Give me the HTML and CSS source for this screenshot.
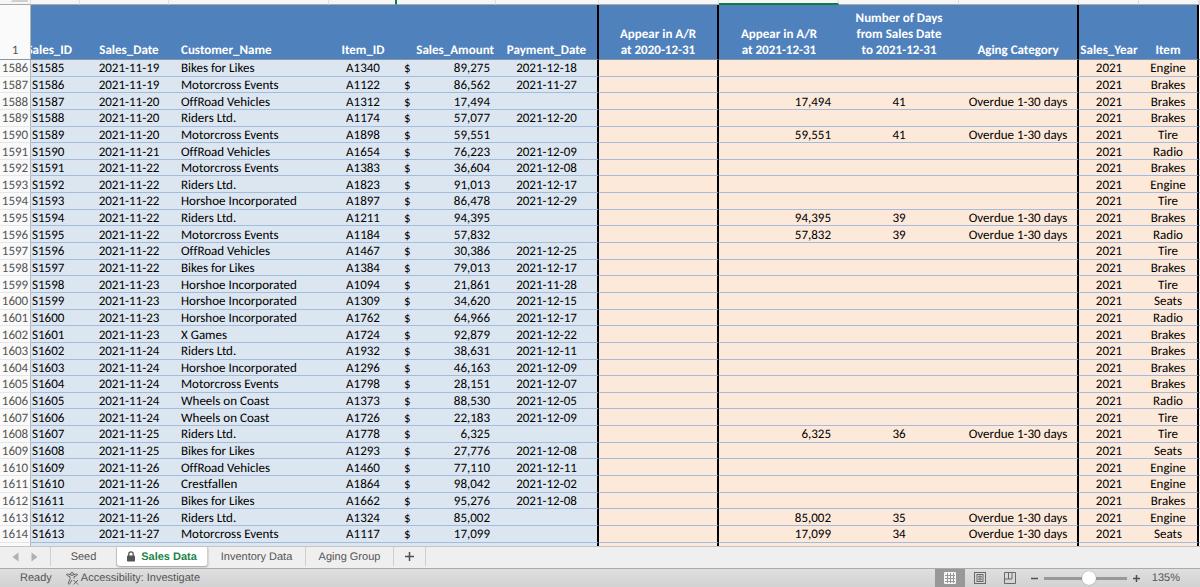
FILE: index.html
```
<!DOCTYPE html>
<html lang="en">
<head>
<meta charset="utf-8">
<title>Sales Data</title>
<link rel="stylesheet" href="styles.css">
</head>
<body>
<main class="sheet">
<table class="grid">
<colgroup><col class="w-row"><col class="w-id"><col class="w-date"><col class="w-customer"><col class="w-code"><col class="w-sign"><col class="w-amount"><col class="w-paid"><col class="w-wide"><col class="w-wide"><col class="w-wide"><col class="w-wide"><col class="w-narrow"><col class="w-narrow"><col class="w-edge"></colgroup>
<thead>
<tr class="letters"><td><svg class="corner" viewBox="0 0 31 4" aria-hidden="true"><path d="M13 0H28V2H10z" fill="#cfcfcf"/></svg><td><td><td><td class="split"><td class="plain"><td><td><td><td class="picked"><td><td><td><td><td></tr>
<tr class="titles"><th class="num">1<th><div class="clip">Sales_ID</div><th>Sales_Date<th>Customer_Name<th>Item_ID<th colspan="2" class="amount">Sales_Amount<th class="rule">Payment_Date<th class="rule">Appear in A/R<br>at 2020-12-31<th>Appear in A/R<br>at 2021-12-31<th>Number of Days<br>from Sales Date<br>to 2021-12-31<th class="rule">Aging Category<th>Sales_Year<th class="rule">Item<th class="blank"></tr>
</thead>
<tbody>
<tr><th>1586<td>S1585<td>2021-11-19<td>Bikes for Likes<td>A1340<td>$<td>89,275<td>2021-12-18<td><td><td><td><td>2021<td>Engine<td></tr>
<tr><th>1587<td>S1586<td>2021-11-19<td>Motorcross Events<td>A1122<td>$<td>86,562<td>2021-11-27<td><td><td><td><td>2021<td>Brakes<td></tr>
<tr><th>1588<td>S1587<td>2021-11-20<td>OffRoad Vehicles<td>A1312<td>$<td>17,494<td><td><td>17,494<td>41<td>Overdue 1-30 days<td>2021<td>Brakes<td></tr>
<tr><th>1589<td>S1588<td>2021-11-20<td>Riders Ltd.<td>A1174<td>$<td>57,077<td>2021-12-20<td><td><td><td><td>2021<td>Brakes<td></tr>
<tr><th>1590<td>S1589<td>2021-11-20<td>Motorcross Events<td>A1898<td>$<td>59,551<td><td><td>59,551<td>41<td>Overdue 1-30 days<td>2021<td>Tire<td></tr>
<tr><th>1591<td>S1590<td>2021-11-21<td>OffRoad Vehicles<td>A1654<td>$<td>76,223<td>2021-12-09<td><td><td><td><td>2021<td>Radio<td></tr>
<tr><th>1592<td>S1591<td>2021-11-22<td>Motorcross Events<td>A1383<td>$<td>36,604<td>2021-12-08<td><td><td><td><td>2021<td>Brakes<td></tr>
<tr><th>1593<td>S1592<td>2021-11-22<td>Riders Ltd.<td>A1823<td>$<td>91,013<td>2021-12-17<td><td><td><td><td>2021<td>Engine<td></tr>
<tr><th>1594<td>S1593<td>2021-11-22<td>Horshoe Incorporated<td>A1897<td>$<td>86,478<td>2021-12-29<td><td><td><td><td>2021<td>Tire<td></tr>
<tr><th>1595<td>S1594<td>2021-11-22<td>Riders Ltd.<td>A1211<td>$<td>94,395<td><td><td>94,395<td>39<td>Overdue 1-30 days<td>2021<td>Brakes<td></tr>
<tr><th>1596<td>S1595<td>2021-11-22<td>Motorcross Events<td>A1184<td>$<td>57,832<td><td><td>57,832<td>39<td>Overdue 1-30 days<td>2021<td>Radio<td></tr>
<tr><th>1597<td>S1596<td>2021-11-22<td>OffRoad Vehicles<td>A1467<td>$<td>30,386<td>2021-12-25<td><td><td><td><td>2021<td>Tire<td></tr>
<tr><th>1598<td>S1597<td>2021-11-22<td>Bikes for Likes<td>A1384<td>$<td>79,013<td>2021-12-17<td><td><td><td><td>2021<td>Brakes<td></tr>
<tr><th>1599<td>S1598<td>2021-11-23<td>Horshoe Incorporated<td>A1094<td>$<td>21,861<td>2021-11-28<td><td><td><td><td>2021<td>Tire<td></tr>
<tr><th>1600<td>S1599<td>2021-11-23<td>Horshoe Incorporated<td>A1309<td>$<td>34,620<td>2021-12-15<td><td><td><td><td>2021<td>Seats<td></tr>
<tr><th>1601<td>S1600<td>2021-11-23<td>Horshoe Incorporated<td>A1762<td>$<td>64,966<td>2021-12-17<td><td><td><td><td>2021<td>Radio<td></tr>
<tr><th>1602<td>S1601<td>2021-11-23<td>X Games<td>A1724<td>$<td>92,879<td>2021-12-22<td><td><td><td><td>2021<td>Brakes<td></tr>
<tr><th>1603<td>S1602<td>2021-11-24<td>Riders Ltd.<td>A1932<td>$<td>38,631<td>2021-12-11<td><td><td><td><td>2021<td>Brakes<td></tr>
<tr><th>1604<td>S1603<td>2021-11-24<td>Horshoe Incorporated<td>A1296<td>$<td>46,163<td>2021-12-09<td><td><td><td><td>2021<td>Brakes<td></tr>
<tr><th>1605<td>S1604<td>2021-11-24<td>Motorcross Events<td>A1798<td>$<td>28,151<td>2021-12-07<td><td><td><td><td>2021<td>Brakes<td></tr>
<tr><th>1606<td>S1605<td>2021-11-24<td>Wheels on Coast<td>A1373<td>$<td>88,530<td>2021-12-05<td><td><td><td><td>2021<td>Radio<td></tr>
<tr><th>1607<td>S1606<td>2021-11-24<td>Wheels on Coast<td>A1726<td>$<td>22,183<td>2021-12-09<td><td><td><td><td>2021<td>Tire<td></tr>
<tr><th>1608<td>S1607<td>2021-11-25<td>Riders Ltd.<td>A1778<td>$<td>6,325<td><td><td>6,325<td>36<td>Overdue 1-30 days<td>2021<td>Tire<td></tr>
<tr><th>1609<td>S1608<td>2021-11-25<td>Bikes for Likes<td>A1293<td>$<td>27,776<td>2021-12-08<td><td><td><td><td>2021<td>Seats<td></tr>
<tr><th>1610<td>S1609<td>2021-11-26<td>OffRoad Vehicles<td>A1460<td>$<td>77,110<td>2021-12-11<td><td><td><td><td>2021<td>Engine<td></tr>
<tr><th>1611<td>S1610<td>2021-11-26<td>Crestfallen<td>A1864<td>$<td>98,042<td>2021-12-02<td><td><td><td><td>2021<td>Engine<td></tr>
<tr><th>1612<td>S1611<td>2021-11-26<td>Bikes for Likes<td>A1662<td>$<td>95,276<td>2021-12-08<td><td><td><td><td>2021<td>Brakes<td></tr>
<tr><th>1613<td>S1612<td>2021-11-26<td>Riders Ltd.<td>A1324<td>$<td>85,002<td><td><td>85,002<td>35<td>Overdue 1-30 days<td>2021<td>Engine<td></tr>
<tr><th>1614<td>S1613<td>2021-11-27<td>Motorcross Events<td>A1117<td>$<td>17,099<td><td><td>17,099<td>34<td>Overdue 1-30 days<td>2021<td>Seats<td></tr>
<tr class="cut"><th><td><td><td><td><td><td><td><td><td><td><td><td><td><td></tr>
</tbody>
</table>
</main>
<nav class="tabs" aria-label="Sheets">
<button class="arrow" aria-label="Previous sheet"><svg width="7" height="10" viewBox="0 0 7 10"><path d="M6.500.5v9L.5 5z"/></svg></button>
<button class="arrow" aria-label="Next sheet"><svg width="7" height="10" viewBox="0 0 7 10"><path d="M.5.5v9L6.500 5z"/></svg></button>
<button class="tab seed">Seed</button>
<button class="tab active"><svg width="8" height="11" viewBox="0 0 8 11" aria-hidden="true"><path d="M1.800 5V3a2.200 2.200 0 0 1 4.400 0v2" fill="none" stroke="#555" stroke-width="1.300"/><rect y="4.500" width="8" height="6" rx=".8" fill="#555"/></svg>Sales Data</button>
<button class="tab inventory">Inventory Data</button>
<button class="tab aging">Aging Group</button>
<button class="tab add" aria-label="Add sheet"><svg width="9" height="9" viewBox="0 0 9 9"><path d="M4.500 0v9M0 4.500h9" stroke="#505050" stroke-width="1.500"/></svg></button>
</nav>
<footer class="status">
<span class="ready">Ready</span>
<button class="access"><svg width="13" height="13" viewBox="0 0 13 13" fill="none" stroke="#666" aria-hidden="true"><circle cx="6" cy="2" r="1.500"/><path d="M4.500 2.800 1.500 2C.3 1.800.2 3.100 1.200 3.500L4 4.700v2.500L2.300 11c-.3 1.300 1 1.600 1.500.7L6 8M7.500 2.800l3-.8c1.200-.2 1.300 1.100.3 1.500L8 4.700v2M7.500 8l4.500 4.500M12 8l-4.500 4.500"/></svg>Accessibility: Investigate</button>
<div class="views">
<button class="view on" aria-label="Normal view"><svg width="12" height="12" viewBox="0 0 12 12"><rect width="12" height="12" rx="1" fill="#f5f5f5"/><path d="M3.500 1v10M6.500 1v10M9.500 1v10M1 3.500h10M1 6.500h10M1 9.500h10" stroke="#989898"/></svg></button>
<button class="view" aria-label="Page layout view"><svg width="12" height="12" viewBox="0 0 12 12" fill="none" stroke="#686868"><rect x=".5" y=".5" width="11" height="11"/><rect x="3" y="2.500" width="6" height="7"/><path d="M4 4.500h4M4 6h4M4 7.500h4M6 3v6" stroke-width=".7"/></svg></button>
<button class="view" aria-label="Page break view"><svg width="12" height="12" viewBox="0 0 12 12" fill="none" stroke="#686868"><path d="M.5.5h11v11H.5zM4.500.5v6.500M8 .5v6.500M.5 7H8"/></svg></button>
</div>
<button class="step" aria-label="Zoom out"><svg width="7" height="7" viewBox="0 0 7 7"><path d="M0 3.500h7" stroke="#505050" stroke-width="1.500"/></svg></button>
<input class="zoom" type="range" min="0" max="100" value="56" aria-label="Zoom">
<button class="step" aria-label="Zoom in"><svg width="7" height="7" viewBox="0 0 7 7"><path d="M0 3.500h7M3.500 0v7" stroke="#505050" stroke-width="1.500"/></svg></button>
<span class="percent">135%</span>
</footer>
</body>
</html>
```

FILE: styles.css
```
* { box-sizing: border-box; }
html, body { height: 100%; }
body {
  margin: 0;
  display: flex;
  flex-direction: column;
  background: #efefef;
  font-family: "Liberation Sans", Arial, sans-serif;
  font-size: 11px;
  text-rendering: geometricPrecision;
  font-variant-ligatures: none;
  color: #555;
}
button { border: 0; padding: 0; margin: 0; background: none; font: inherit; color: inherit; text-rendering: inherit; }

.sheet { flex: 1; min-height: 0; overflow: hidden; }
.grid {
  width: 100%;
  height: 100%;
  table-layout: fixed;
  border-spacing: 0;
  font-family: Carlito, Calibri, Lato, sans-serif;
  font-size: 13px;
  line-height: 12px;
  color: #000;
}
.w-row { width: 31px; }
.w-id { width: 49px; }
.w-date { width: 89px; }
.w-customer { width: 160px; }
.w-code { width: 68px; }
.w-sign { width: 20px; }
.w-amount { width: 79px; }
.w-paid { width: 103px; }
.w-wide { width: 120px; }
.w-narrow { width: 60px; }
.w-edge { width: 1px; }

th, td { padding: 0; white-space: nowrap; text-align: center; }
tbody th, tbody td { padding-top: 3px; }
tbody td { border-bottom: 1px solid #a3bbdc; background: #dce6f1; font-weight: 500; }
tbody td:nth-child(n+9) { background: #fde9d9; }
tbody td:nth-child(2) { text-align: left; padding-left: 1px; }
tbody td:nth-child(3), .titles th:nth-child(3) { padding-left: 9px; }
tbody td:nth-child(4), .titles th:nth-child(4) { text-align: left; padding-left: 12px; }
tbody td:nth-child(6) { text-align: left; padding-left: 7px; }
tbody td:nth-child(7) { text-align: right; padding-right: 6px; }
tbody td:nth-child(10) { text-align: right; padding-right: 8px; }
tbody td:nth-child(8), tbody td:nth-child(9), tbody td:nth-child(12), tbody td:nth-child(14),
.titles .rule { border-right: 2px solid #000; }
tbody td:nth-child(15) { background: #fff; }
tbody th {
  border-right: 1px solid #b4b4b4;
  border-bottom: 1px solid #e6e6e6;
  background: #fafafa;
  font-weight: 400;
  color: #555;
}

.letters { height: 5px; font-size: 0; line-height: 0; }
.letters td { height: 5px; background: #f6f6f6; border-right: 1px solid #ddd; border-bottom: 1px solid #aaa; }
.letters .split { border-right: 2px solid #107c41; }
.letters .plain { border-right: 0; }
.letters .picked { border-bottom: 2px solid #107c41; }
.corner { display: block; width: 31px; height: 4px; }

.titles { height: 55px; }
.titles th {
  height: 55px;
  line-height: 16px;
  vertical-align: bottom;
  background: #4f81bd;
  border-bottom: 1px solid #8795a8;
  color: #fff;
}
.titles .num { background: #fafafa; border-right: 1px solid #b4b4b4; font-weight: 400; color: #555; }
.titles .amount { text-align: right; padding-right: 2px; }
.titles .blank { background: #fff; }
.clip { display: flex; justify-content: flex-end; overflow: hidden; padding-right: 8px; }

.cut { height: 3px; font-size: 0; line-height: 0; }
.cut th, .cut td { height: 3px; border-bottom: 0; }

.tabs {
  display: flex;
  align-items: flex-start;
  height: 22px;
  border-top: 1px solid #c4c4c4;
}
.arrow { width: 19px; height: 19px; display: flex; align-items: center; justify-content: flex-end; fill: #b0b0b0; }
.arrow + .tab { margin-left: 12px; }
.arrow svg { display: block; }
.tab {
  display: flex;
  align-items: center;
  justify-content: center;
  height: 19px;
  border-right: 1px solid #d0d0d0;
}
.seed { width: 67px; border-left: 1px solid #d0d0d0; }
.active {
  width: 91px;
  gap: 6px;
  background: #fff;
  border-radius: 0 0 3px 3px;
  box-shadow: 0 1px 2px #999;
  color: #1e8449;
  font-weight: 700;
}
.inventory { width: 98px; }
.aging { width: 88px; }
.add { width: 32px; }

.status {
  display: flex;
  align-items: center;
  height: 19px;
  padding: 0 20px;
  border-top: 1px solid #aaa;
  background: linear-gradient(#dfdfdf, #d2d2d2);
}
.access { display: flex; align-items: center; gap: 2px; margin-left: 14px; }
.views { display: flex; align-self: stretch; margin-left: auto; }
.view { display: flex; align-items: center; justify-content: center; width: 30px; }
.on { background: #989898; }
.step { display: flex; margin-left: 6px; }
.zoom {
  appearance: none;
  width: 83px;
  height: 14px;
  margin: 0 0 0 6px;
  background: linear-gradient(#999, #999) center / 100% 3px no-repeat;
}
.zoom::-webkit-slider-thumb { appearance: none; width: 14px; height: 14px; border-radius: 50%; background: #fff; box-shadow: 0 0 1px #777; }
.percent { margin-left: 12px; }
```
